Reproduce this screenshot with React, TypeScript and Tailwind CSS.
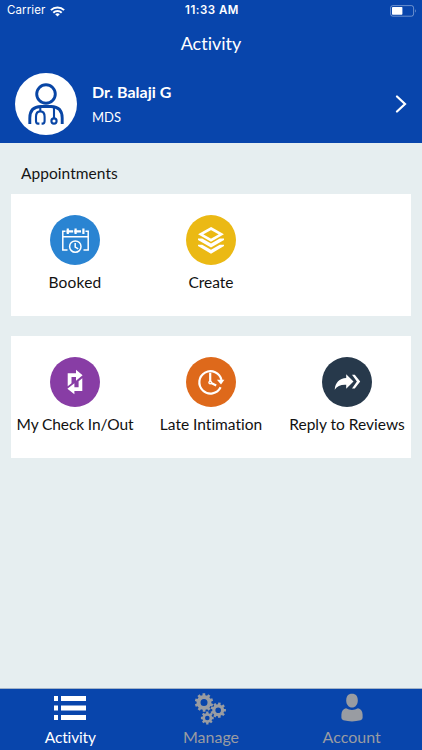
import type { ReactNode } from "react";

function gearPath(cx: number, cy: number, outer: number, inner: number, hole: number, teeth: number, turn: number) {
  const step = (Math.PI * 2) / teeth;
  const at = (r: number, a: number) => `${(cx + r * Math.cos(a)).toFixed(2)} ${(cy + r * Math.sin(a)).toFixed(2)}`;
  const pts: string[] = [];
  for (let i = 0; i < teeth; i++) {
    const a = i * step + turn;
    pts.push(at(inner, a - step * 0.3), at(outer, a - step * 0.23), at(outer, a + step * 0.23), at(inner, a + step * 0.3));
  }
  return `M${pts.join("L")}ZM${cx - hole} ${cy}a${hole} ${hole} 0 1 0 ${hole * 2} 0a${hole} ${hole} 0 1 0 ${-hole * 2} 0Z`;
}

function Tile({ color, label, labelClass = "", children }: { color: string; label: string; labelClass?: string; children: ReactNode }) {
  return (
    <div className="flex flex-col items-center">
      <div className={`size-[50px] rounded-full ${color}`}>
        <svg viewBox="0 0 50 50" className="size-full">{children}</svg>
      </div>
      <span className={`mt-[7px] whitespace-nowrap text-[15.5px] leading-5 text-[#111] ${labelClass}`}>{label}</span>
    </div>
  );
}

function StatusBar() {
  return (
    <div className="flex h-[22px] items-center font-['Inter',sans-serif] text-white">
      <div className="flex flex-1 items-center pl-[7px]">
        <span className="text-[11.5px] tracking-[0.1px]">Carrier</span>
        <svg viewBox="0 0 15 11" className="ml-[5px] h-[11px] w-[15px]" fill="none" stroke="currentColor" strokeWidth="2">
          <path d="M.9 4.1a9.4 9.4 0 0 1 13.2 0M3.3 6.7a6 6 0 0 1 8.4 0" />
          <path d="M7.5 10.6 5.2 8.3a3.3 3.3 0 0 1 4.6 0Z" fill="currentColor" stroke="none" />
        </svg>
      </div>
      <span className="text-[11.5px] font-semibold tracking-[0.5px]">11:33 AM</span>
      <div className="flex flex-1 justify-end pr-[5px]">
        <svg viewBox="0 0 27 12" className="h-3 w-[27px]">
          <rect x=".6" y=".6" width="23" height="10.6" rx="2.2" fill="none" stroke="#fff" strokeOpacity=".4" />
          <rect x="2" y="2" width="10.4" height="7.8" rx=".7" fill="#fff" />
          <path d="M25 4q1.6 1.9 0 3.8Z" fill="#fff" fillOpacity=".5" />
        </svg>
      </div>
    </div>
  );
}

export default function App() {
  return (
    <div className="flex h-[750px] w-[422px] flex-col overflow-hidden bg-[#e6eef0] font-['Lato',sans-serif] [font-variant-ligatures:none]">
      <header className="h-[143px] bg-[#0845ac] text-white">
        <StatusBar />
        <h1 className="h-[43px] text-center text-lg leading-[43px]">Activity</h1>
        <div className="flex h-[78px] items-center pl-[15px] pr-[15px]">
          <div className="size-[62px] rounded-full bg-white">
            <svg viewBox="0 0 62 62" className="size-full" fill="none" stroke="#0845a5" strokeWidth="2.9">
              <circle cx="31" cy="21" r="9.3" />
              <path d="M14.8 51V45Q14.8 33.7 26 33.5H36Q47.2 33.7 47.2 45V51" />
              <g strokeWidth="2.1">
                <path d="M25.3 33.5V38M24.4 50.6H23Q21 50.6 21 48V43.8Q21 38.4 25.3 38.4Q29.6 38.4 29.6 43.8V48Q29.6 50.6 27.5 50.6H26.6" />
                <path d="M39 33.5V45.5" />
                <circle cx="39" cy="48" r="2.6" />
              </g>
            </svg>
          </div>
          <div className="ml-[15px] flex flex-1 flex-col gap-[5px]">
            <span className="text-base font-bold leading-5">Dr. Balaji G</span>
            <span className="text-[13px] leading-5">MDS</span>
          </div>
          <svg viewBox="0 0 12 18" className="h-[18px] w-3" fill="none" stroke="#fff" strokeWidth="2.2" strokeLinecap="round">
            <path d="M2 1.5 10 9l-8 7.5" />
          </svg>
        </div>
      </header>

      <main className="flex-1 px-[11px]">
        <h2 className="h-[51px] pl-[10px] pt-[20px] text-[15.5px] leading-5 tracking-[0.05px] text-[#151515]">Appointments</h2>
        <section className="h-[122px] bg-white pt-[21px]">
          <div className="-mx-1 grid grid-cols-3">
            <Tile color="bg-[#2a84d2]" label="Booked" labelClass="tracking-[0.2px]">
              <g fill="none" stroke="#fff" strokeWidth="1.5">
                <path d="M17.5 35H12.8V16.3H15.5M33.5 35H38.2V16.3H35.5M13 21.8H38" />
                <path d="M17.8 13.5v5.5M25.6 13.5v5.5M33.4 13.5v5.5" strokeWidth="2.2" />
                <path d="M16.5 16.3h6.7M24.3 16.3h6.7" strokeWidth="2.2" />
                <circle cx="25.3" cy="31.6" r="5.7" />
                <path d="M25.2 28v4.1l3 1.7" />
              </g>
            </Tile>
            <Tile color="bg-[#ebb914]" label="Create">
              <path d="M25 13.5 35.3 19.3 25 25.2 14.7 19.3Z" fill="none" stroke="#fff" strokeWidth="2.6" />
              <path d="M12 23.6h4.2L25 28.6l8.8-5h4.2v1.3L25 32.4 12 24.9ZM12 29.8h4.2L25 34.8l8.8-5h4.2v1.3L25 38.8 12 31.1Z" fill="#fff" />
            </Tile>
          </div>
        </section>
        <section className="mt-5 h-[122px] bg-white pt-[21px]">
          <div className="-mx-1 grid grid-cols-3">
            <Tile color="bg-[#883da5]" label="My Check In/Out" labelClass="tracking-[-0.1px]">
              <path d="M17.7 16.2H26V12.8L32.6 18.3 26 23.8V20H21.5V26.2L17.7 29.2ZM32.3 34H24.4V37.3L17.4 31.8 24.4 26.3V30.2H28.6V24.2L32.3 21.2Z" fill="#fff" />
            </Tile>
            <Tile color="bg-[#de691b]" label="Late Intimation">
              <g fill="none" stroke="#fff" strokeWidth="2.2">
                <path d="M34.6 30.3A11.2 11.2 0 1 1 35.5 23" />
                <path d="M24.2 15.7V25.2M24.2 25.5l6 3" />
              </g>
              <circle cx="24.2" cy="25.5" r="1.9" fill="#fff" />
              <circle cx="24.2" cy="25.5" r=".6" fill="#de691b" />
              <path d="M30.9 22.8H38.4L35 27.5Z" fill="#fff" />
            </Tile>
            <Tile color="bg-[#27394b]" label="Reply to Reviews">
              <path d="M12.7 32.7C13.4 25.5 17.3 21.6 24.2 21.1V17.2L31.5 24.6 24.2 31.7V27.8C18.8 27.5 15.2 29 12.7 32.7Z" fill="#fff" />
              <path d="M30 17.7h2.8l5.4 6.9-5.4 6.9H30l4.9-6.9Z" fill="#fff" />
            </Tile>
          </div>
        </section>
      </main>

      <nav className="grid h-[62px] grid-cols-3 border-t border-[#a3b3c8] bg-[#0845ac] text-base text-[#999ca2]">
        <div className="flex flex-col items-center pt-[7px] text-white">
          <svg viewBox="0 0 32 24" className="h-6 w-8" fill="currentColor">
            <path d="M0 0h4v5H0ZM7 0h25v5H7ZM0 9.5h4v5H0ZM7 9.5h25v5H7ZM0 19h4v5H0ZM7 19h25v5H7Z" />
          </svg>
          <span className="mt-[7px] text-[15.5px] leading-5 tracking-[-0.15px]">Activity</span>
        </div>
        <div className="flex flex-col items-center pt-[4px]">
          <svg viewBox="0 0 32 32" className="h-8 w-8" fill="currentColor" fillRule="evenodd">
            <path d={gearPath(9, 9.5, 9.3, 7.4, 3.5, 10, 0.3)} />
            <path d={gearPath(23.2, 17.2, 7.8, 6, 2.8, 9, 0)} />
            <path d={gearPath(12.3, 25, 6.5, 5, 2.3, 8, 0)} />
          </svg>
          <span className="mt-[2px] leading-5">Manage</span>
        </div>
        <div className="flex flex-col items-center pt-[4px]">
          <svg viewBox="0 0 22 29" className="h-[29px] w-[22px]" fill="currentColor">
            <path d="M11 .7C15 .7 16.8 3.2 16.8 7.5s-2.6 7-5.8 7-5.8-2.7-5.8-7S7 .7 11 .7Z" />
            <path d="M5 15.2Q11 18.6 17 15.2Q21.2 16 21.6 21.5V24.5Q21.8 26.6 19.6 27.3Q11 29.6 2.4 27.3Q.2 26.6 .4 24.5V21.5Q.8 16 5 15.2Z" />
          </svg>
          <span className="mt-[5px] leading-5">Account</span>
        </div>
      </nav>
    </div>
  );
}
